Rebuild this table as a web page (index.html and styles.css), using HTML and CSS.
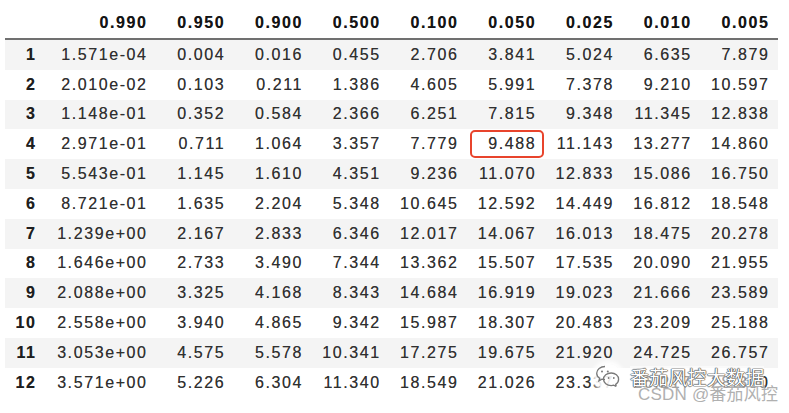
FILE: index.html
```html
<!DOCTYPE html>
<html lang="zh">
<head>
<meta charset="utf-8">
<link rel="stylesheet" href="styles.css">
</head>
<body>
<div class="table">
  <div class="row head"><div class="c idx"></div><div class="c">0.990</div><div class="c">0.950</div><div class="c">0.900</div><div class="c">0.500</div><div class="c">0.100</div><div class="c">0.050</div><div class="c">0.025</div><div class="c">0.010</div><div class="c">0.005</div></div>
  <div class="row odd"><div class="c idx">1</div><div class="c">1.571e-04</div><div class="c">0.004</div><div class="c">0.016</div><div class="c">0.455</div><div class="c">2.706</div><div class="c">3.841</div><div class="c">5.024</div><div class="c">6.635</div><div class="c">7.879</div></div>
  <div class="row"><div class="c idx">2</div><div class="c">2.010e-02</div><div class="c">0.103</div><div class="c">0.211</div><div class="c">1.386</div><div class="c">4.605</div><div class="c">5.991</div><div class="c">7.378</div><div class="c">9.210</div><div class="c">10.597</div></div>
  <div class="row odd"><div class="c idx">3</div><div class="c">1.148e-01</div><div class="c">0.352</div><div class="c">0.584</div><div class="c">2.366</div><div class="c">6.251</div><div class="c">7.815</div><div class="c">9.348</div><div class="c">11.345</div><div class="c">12.838</div></div>
  <div class="row"><div class="c idx">4</div><div class="c">2.971e-01</div><div class="c">0.711</div><div class="c">1.064</div><div class="c">3.357</div><div class="c">7.779</div><div class="c mark">9.488</div><div class="c">11.143</div><div class="c">13.277</div><div class="c">14.860</div></div>
  <div class="row odd"><div class="c idx">5</div><div class="c">5.543e-01</div><div class="c">1.145</div><div class="c">1.610</div><div class="c">4.351</div><div class="c">9.236</div><div class="c">11.070</div><div class="c">12.833</div><div class="c">15.086</div><div class="c">16.750</div></div>
  <div class="row"><div class="c idx">6</div><div class="c">8.721e-01</div><div class="c">1.635</div><div class="c">2.204</div><div class="c">5.348</div><div class="c">10.645</div><div class="c">12.592</div><div class="c">14.449</div><div class="c">16.812</div><div class="c">18.548</div></div>
  <div class="row odd"><div class="c idx">7</div><div class="c">1.239e+00</div><div class="c">2.167</div><div class="c">2.833</div><div class="c">6.346</div><div class="c">12.017</div><div class="c">14.067</div><div class="c">16.013</div><div class="c">18.475</div><div class="c">20.278</div></div>
  <div class="row"><div class="c idx">8</div><div class="c">1.646e+00</div><div class="c">2.733</div><div class="c">3.490</div><div class="c">7.344</div><div class="c">13.362</div><div class="c">15.507</div><div class="c">17.535</div><div class="c">20.090</div><div class="c">21.955</div></div>
  <div class="row odd"><div class="c idx">9</div><div class="c">2.088e+00</div><div class="c">3.325</div><div class="c">4.168</div><div class="c">8.343</div><div class="c">14.684</div><div class="c">16.919</div><div class="c">19.023</div><div class="c">21.666</div><div class="c">23.589</div></div>
  <div class="row"><div class="c idx">10</div><div class="c">2.558e+00</div><div class="c">3.940</div><div class="c">4.865</div><div class="c">9.342</div><div class="c">15.987</div><div class="c">18.307</div><div class="c">20.483</div><div class="c">23.209</div><div class="c">25.188</div></div>
  <div class="row odd"><div class="c idx">11</div><div class="c">3.053e+00</div><div class="c">4.575</div><div class="c">5.578</div><div class="c">10.341</div><div class="c">17.275</div><div class="c">19.675</div><div class="c">21.920</div><div class="c">24.725</div><div class="c">26.757</div></div>
  <div class="row"><div class="c idx">12</div><div class="c">3.571e+00</div><div class="c">5.226</div><div class="c">6.304</div><div class="c">11.340</div><div class="c">18.549</div><div class="c">21.026</div><div class="c">23.337</div><div class="c">26.217</div><div class="c">28.300</div></div>
</div>
<div class="watermark">
  <div class="wm-top">
    <svg class="wechat" width="26" height="25" viewBox="0 0 26 25" fill="none" stroke="#7a7a7a" stroke-width="1.3">
      <path d="M10 2.5c-4.6 0-8.3 3-8.3 6.7 0 2.1 1.2 3.9 3 5.1l-.8 2.6 3-1.7c1 .3 2.1.5 3.1.5"/>
      <path d="M16.2 9c-4.3 0-7.7 2.8-7.700 6.3s3.4 6.3 7.7 6.3c.9 0 1.8-.1 2.6-.4l2.6 1.5-.7-2.3c1.8-1.2 2.9-3 2.9-5.1 0-3.5-3.4-6.3-7.4-6.3z"/>
      <circle cx="7" cy="7.5" r="1" fill="#7a7a7a" stroke="none"/>
      <circle cx="12.8" cy="7.5" r="1" fill="#7a7a7a" stroke="none"/>
      <circle cx="13.6" cy="14" r=".9" fill="#7a7a7a" stroke="none"/>
      <circle cx="18.8" cy="14" r=".9" fill="#7a7a7a" stroke="none"/>
    </svg>
    <span class="wm-title">番茄风控大数据</span>
  </div>
  <div class="wm-sub">CSDN @番茄风控</div>
</div>
</body>
</html>
```
FILE: styles.css
```css
html, body {
  margin: 0;
  padding: 0;
  background: #ffffff;
}
body {
  width: 789px;
  height: 413px;
  overflow: hidden;
  position: relative;
  font-family: "Liberation Sans", Arial, sans-serif;
}
.table {
  padding-left: 5px;
  width: 773px;
}
.row {
  display: grid;
  grid-template-columns: 40px 111px repeat(8, 77.75px);
  height: 29.8px;
  align-items: center;
  font-size: 16px;
  letter-spacing: 1.6px;
  color: #303030;
  text-shadow: 0 0 0.6px rgba(40, 40, 40, 0.6);
}
.row.head {
  height: 40px;
  box-sizing: border-box;
  padding-top: 8px;
  border-bottom: 2px solid #707070;
  font-weight: bold;
  color: #141414;
}
.row.odd {
  background: #f4f4f4;
}
.c {
  padding-right: 8.4px;
  white-space: nowrap;
  position: relative;
  height: 100%;
  display: flex;
  align-items: center;
  justify-content: flex-end;
}
.c.idx {
  font-weight: bold;
  color: #1e1e1e;
}
.c.mark::after {
  content: "";
  position: absolute;
  left: 3px;
  right: 1px;
  top: 1px;
  bottom: 1px;
  border: 2.5px solid #e8442c;
  border-radius: 5px;
}
.watermark {
  position: absolute;
  left: 595px;
  top: 364px;
}
.wm-top {
  display: flex;
  align-items: center;
  gap: 9px;
}
.wechat {
  display: block;
  background: rgba(255, 255, 255, 0.9);
  border-radius: 12px;
  box-shadow: 0 0 4px 3px rgba(255, 255, 255, 0.9);
}
.wm-title {
  font-family: "Noto Sans CJK SC", sans-serif;
  font-size: 19px;
  line-height: 22px;
  color: #ffffff;
  background: rgba(255, 255, 255, 0.55);
  text-shadow: 0 0 1px #444, 0 0 1px #444, 0 0 1px #444, 0 0 1px #444;
  letter-spacing: 0.2px;
}
.wm-sub {
  margin-left: 43px;
  margin-top: -3px;
  font-family: "Liberation Sans", "Noto Sans CJK SC", sans-serif;
  font-size: 17px;
  line-height: 18px;
  color: #b0b0b0;
  letter-spacing: 0.2px;
}
```
